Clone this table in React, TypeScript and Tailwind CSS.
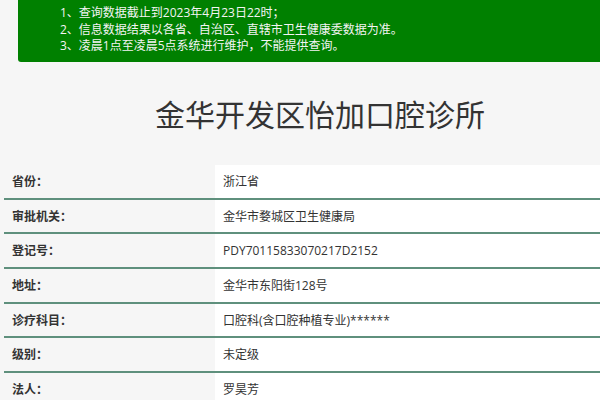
const notices = [
  '1、查询数据截止到2023年4月23日22时；',
  '2、信息数据结果以各省、自治区、直辖市卫生健康委数据为准。',
  '3、凌晨1点至凌晨5点系统进行维护，不能提供查询。',
];

const rows = [
  { label: '省份：', value: '浙江省' },
  { label: '审批机关：', value: '金华市婺城区卫生健康局' },
  { label: '登记号：', value: 'PDY70115833070217D2152' },
  { label: '地址：', value: '金华市东阳街128号' },
  { label: '诊疗科目：', value: '口腔科(含口腔种植专业)******' },
  { label: '级别：', value: '未定级' },
  { label: '法人：', value: '罗昊芳' },
];

export default function App() {
  return (
    <div
      className="w-[600px] h-[400px] overflow-hidden bg-[#f6f6f6] text-[#333]"
      style={{ fontFamily: '"Open Sans", "Noto Sans CJK SC", sans-serif' }}
    >
      {/* 提示 */}
      <div className="ml-[18px] h-[62px] bg-[#008000] rounded-bl-[3px] pl-[42px] pt-[5px] text-[#f4f4f4] text-[12px] leading-[16.5px]">
        {notices.map((n) => (
          <p key={n}>{n}</p>
        ))}
      </div>

      <h1
        className="mt-[27px] text-center text-[30px] leading-[48px] font-normal text-[#333] pl-[40px]"
        style={{ fontFamily: '"Noto Sans CJK SC", sans-serif' }}
      >
        金华开发区怡加口腔诊所
      </h1>

      {/* 详情表 */}
      <div className="mt-[28px] ml-[4px]">
        {rows.map((r) => (
          <div key={r.label} className="flex h-[34.7px] border-b-2 border-[#5f907d]">
            <div className="w-[211px] flex items-center pl-[8px] pt-[1px] text-[12px] font-bold">
              {r.label}
            </div>
            <div className="flex-1 flex items-center bg-white pl-[8px] pt-[1px] text-[12px]">
              {r.value}
            </div>
          </div>
        ))}
      </div>
    </div>
  );
}
